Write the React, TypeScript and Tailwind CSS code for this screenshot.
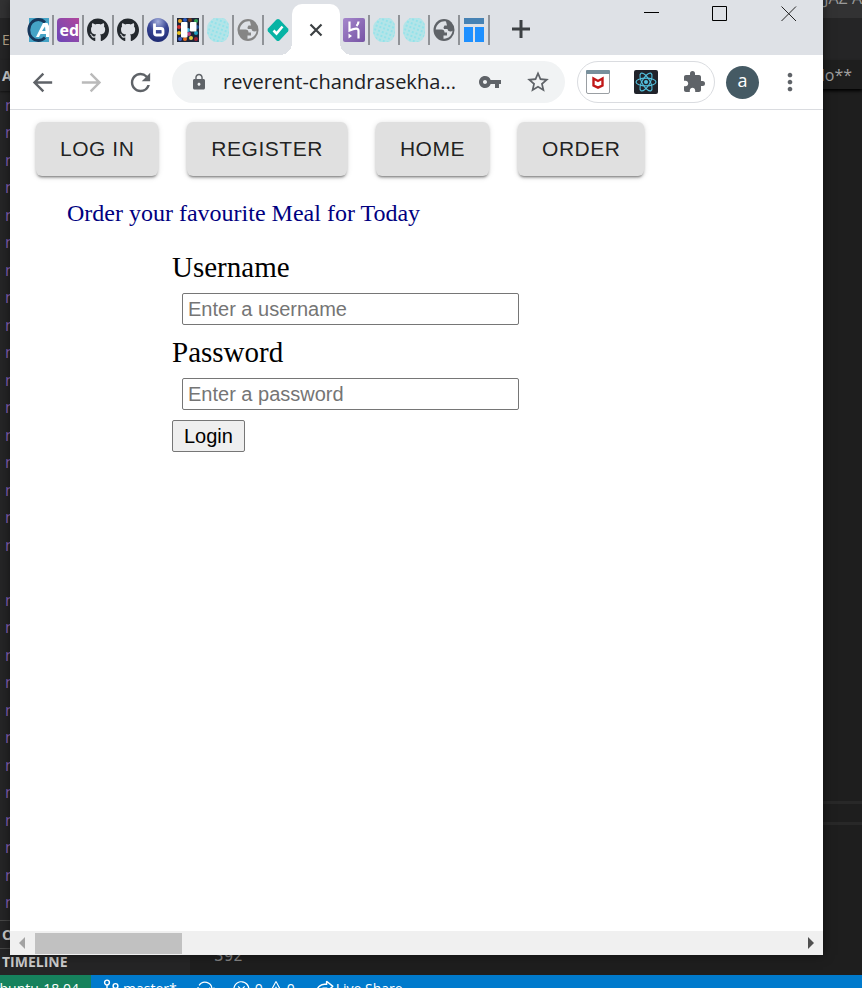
import type { ReactNode } from "react";
import { FaGithub } from "react-icons/fa";
import {
  MdArrowBack,
  MdArrowForward,
  MdExtension,
  MdLock,
  MdMoreVert,
  MdRefresh,
  MdStarBorder,
  MdVpnKey,
} from "react-icons/md";
import { VscError, VscLiveShare, VscSync, VscWarning } from "react-icons/vsc";

const UI = "font-['Open_Sans','Noto_Sans',sans-serif]";

/* ---------- favicons ---------- */

function CodeAcademyIcon() {
  return (
    <svg viewBox="0 0 22 24" className="h-6 w-[22px]">
      <rect x="2" width="20" height="24" fill="#45a3c6" />
      <path d="M18 4.500A9.500 10.500 0 1 0 18 19.500" fill="none" stroke="#17375b" strokeWidth="2.800" />
      <path d="M9 19L16 5H20.500L22 8V19H19V16H13.500L12 19Z" fill="#fff" />
      <path d="M15 13H18.500L18 8.500Z" fill="#45a3c6" />
    </svg>
  );
}

function EdIcon() {
  return (
    <span className="flex h-6 w-[22px] items-center justify-end overflow-hidden rounded-l bg-linear-to-tr from-[#6a45b8] to-[#b0459c] font-['Open_Sans',sans-serif] text-base leading-none font-bold text-white">
      ed
    </span>
  );
}

function GithubIcon() {
  return <FaGithub className="h-6 w-[22px] text-[#24292e]" preserveAspectRatio="none" />;
}

function BlueBIcon() {
  return (
    <svg viewBox="0 0 22 24" className="h-6 w-[22px]">
      <defs>
        <radialGradient id="blueBall" cx="0.5" cy="0.15" r="0.85">
          <stop offset="0" stopColor="#a5b0dd" />
          <stop offset="0.5" stopColor="#3a4795" />
          <stop offset="1" stopColor="#1e2a72" />
        </radialGradient>
      </defs>
      <ellipse cx="11" cy="12" rx="11" ry="12" fill="url(#blueBall)" />
      <path d="M7.500 5.500V15a2 2 0 0 0 2 2H14a2 2 0 0 0 2-2V12.500a2 2 0 0 0-2-2H8" fill="none" stroke="#fff" strokeWidth="2.800" />
    </svg>
  );
}

function TrelloIcon() {
  const dots = [
    ["#e8a020", 3, 3], ["#2a5cc0", 8, 2], ["#7a3a1a", 13, 2], ["#30a050", 19, 3],
    ["#d03030", 2, 9], ["#205090", 20, 9], ["#e8c020", 2, 15], ["#c04080", 12, 16],
    ["#20a0c0", 19, 15], ["#3a60d0", 3, 21], ["#e87020", 8, 21], ["#e0d040", 14, 20],
    ["#a02030", 19, 21], ["#40b0e0", 11, 12],
  ] as const;
  return (
    <svg viewBox="0 0 22 24" className="h-6 w-[22px]">
      <rect width="22" height="24" fill="#1c2438" />
      {dots.map(([fill, x, y]) => (
        <circle key={`${x}-${y}`} cx={x} cy={y} r="2" fill={fill} />
      ))}
      <rect x="4" y="4" width="6.500" height="15.500" rx="1" fill="#fff" />
      <rect x="13" y="4" width="6.500" height="9.500" rx="1" fill="#fff" />
    </svg>
  );
}

function DottedBallIcon() {
  return (
    <svg viewBox="0 0 22 24" className="h-6 w-[22px]">
      <defs>
        <pattern id="tealDots" width="4" height="4" patternUnits="userSpaceOnUse" patternTransform="rotate(20)">
          <rect width="4" height="4" fill="#b3e4e8" />
          <circle cx="2" cy="2" r="0.900" fill="#84e2ec" />
        </pattern>
      </defs>
      <path d="M7 0H17Q22 4 22 8V16Q21 21 16 24H7Q0 20 0 13V11Q0 4 7 0Z" fill="url(#tealDots)" />
    </svg>
  );
}

function GlobeIcon({ color }: { color: string }) {
  return (
    <svg viewBox="0 0 22 24" className="h-6 w-[22px]">
      <ellipse cx="11" cy="12" rx="10.500" ry="11" fill={color} />
      <path
        d="M13 3.500C8.500 2.500 3.500 6 2.700 11.500H8.500Q11.500 11.500 11.500 14.500H14V17.500H10.500V20.700C15 21 19.300 17.500 19.500 12.500C18.500 14 15 14 14.500 11H11Q9.800 9.500 11.500 7.500H14Z"
        fill="#dee1e6"
      />
    </svg>
  );
}

function DiamondCheckIcon() {
  return (
    <svg viewBox="0 0 22 24" className="h-6 w-[22px]">
      <path d="M9.500 1.500Q11 .3 12.500 1.500L21 10.500Q22 12 21 13.500L12.500 22.500Q11 23.700 9.500 22.500L1 13.500Q0 12 1 10.500Z" fill="#06b3a4" />
      <path d="M6.500 12.500L9.500 15.500L15.500 8.500" fill="none" stroke="#fff" strokeWidth="2.600" />
    </svg>
  );
}

function HerokuIcon() {
  return (
    <svg viewBox="0 0 22 24" className="h-6 w-[22px]">
      <defs>
        <linearGradient id="heroku" x1="0" y1="0" x2="1" y2="1">
          <stop offset="0" stopColor="#a587cc" />
          <stop offset="1" stopColor="#7653a4" />
        </linearGradient>
      </defs>
      <rect width="22" height="24" rx="2" fill="url(#heroku)" />
      <path d="M6.500 3.500V12.500Q15.500 8.500 15.500 13V20.500M15.500 3.500Q15.500 6 13.500 8" fill="none" stroke="#fff" strokeWidth="2.200" />
      <path d="M5.500 15.500L9 18L5.500 20.500Z" fill="#fff" />
    </svg>
  );
}

function LayoutIcon() {
  return (
    <svg viewBox="0 0 22 24" className="h-6 w-[22px]">
      <rect width="20" height="6" x="1" fill="#4682b4" />
      <rect x="1" y="9" width="9" height="15" fill="#1e90ff" />
      <rect x="12" y="9" width="9" height="15" fill="#1e90ff" />
    </svg>
  );
}

/* ---------- browser chrome ---------- */

function Tab({ label, children, last = false }: { label: string; children: ReactNode; last?: boolean }) {
  return (
    <button
      aria-label={label}
      className={`flex h-[30px] shrink-0 items-center px-[3px] ${last ? "" : "border-r-2 border-[#909398]"}`}
    >
      {children}
    </button>
  );
}

function TabStrip() {
  return (
    <header className="flex h-[55px] shrink-0 bg-[#dee1e6]">
      <div className="flex pt-[15px] pl-3.5">
        <Tab label="Academy"><CodeAcademyIcon /></Tab>
        <Tab label="ed"><EdIcon /></Tab>
        <Tab label="GitHub"><GithubIcon /></Tab>
        <Tab label="GitHub"><GithubIcon /></Tab>
        <Tab label="b"><BlueBIcon /></Tab>
        <Tab label="Board"><TrelloIcon /></Tab>
        <Tab label="Site"><DottedBallIcon /></Tab>
        <Tab label="Page"><GlobeIcon color="#858585" /></Tab>
        <Tab label="Check" last><DiamondCheckIcon /></Tab>
      </div>
      <div className="relative mt-1 flex w-12 shrink-0 items-center justify-center rounded-t-[10px] bg-white">
        <span className="absolute bottom-0 -left-3 size-3 bg-[radial-gradient(circle_at_0_0,#dee1e6_12px,#fff_12px)]" />
        <span className="absolute -right-3 bottom-0 size-3 bg-[radial-gradient(circle_at_100%_0,#dee1e6_12px,#fff_12px)]" />
        <button aria-label="Close tab">
          <svg viewBox="0 0 14 14" className="size-3.5" stroke="#3c4043" strokeWidth="2.200">
            <path d="M1.500 1.500L12.500 12.500M12.500 1.500L1.500 12.500" />
          </svg>
        </button>
      </div>
      <div className="flex pt-[15px]">
        <Tab label="Heroku"><HerokuIcon /></Tab>
        <Tab label="Site"><DottedBallIcon /></Tab>
        <Tab label="Site"><DottedBallIcon /></Tab>
        <Tab label="Page"><GlobeIcon color="#5f6368" /></Tab>
        <Tab label="Layout"><LayoutIcon /></Tab>
      </div>
      <button aria-label="New tab" className="ml-4 flex h-[58px] w-[30px] items-center justify-center">
        <svg viewBox="0 0 18 18" className="size-[18px]" stroke="#3c4043" strokeWidth="3">
          <path d="M9 0V18M0 9H18" />
        </svg>
      </button>
      <div className="ml-auto flex items-start gap-[53px] pt-[6px] pr-[26px]">
        <button aria-label="Minimize">
          <svg viewBox="0 0 16 16" className="size-4" stroke="#000"><path d="M1 6.500H16" /></svg>
        </button>
        <button aria-label="Maximize">
          <svg viewBox="0 0 16 16" className="size-4" stroke="#000" fill="none"><path d="M.5 .5H14.500V14.500H.5Z" /></svg>
        </button>
        <button aria-label="Close">
          <svg viewBox="0 0 16 16" className="size-4" stroke="#222"><path d="M.5 .5L15 15M15 .5L.5 15" /></svg>
        </button>
      </div>
    </header>
  );
}

function McAfeeIcon() {
  return (
    <svg viewBox="0 0 24 24" className="size-6">
      <rect x=".5" y=".5" width="23" height="23" rx="1.500" fill="#fff" stroke="#9a9fa3" />
      <rect width="24" height="4" rx="1" fill="#78909c" />
      <path d="M7.500 8.500L12 11L16.500 8.500V15.500L12 17.700L7.500 15.500Z" fill="none" stroke="#c01818" strokeWidth="2.400" />
    </svg>
  );
}

function ReactIcon() {
  return (
    <svg viewBox="0 0 24 24" className="size-6" fill="none" stroke="#53c1de" strokeWidth="1.100">
      <rect width="24" height="24" rx="2" fill="#20232a" stroke="none" />
      <ellipse cx="12" cy="12" rx="10" ry="3.900" />
      <ellipse cx="12" cy="12" rx="10" ry="3.900" transform="rotate(60 12 12)" />
      <ellipse cx="12" cy="12" rx="10" ry="3.900" transform="rotate(120 12 12)" />
      <circle cx="12" cy="12" r="2" fill="#53c1de" stroke="none" />
    </svg>
  );
}

function Toolbar() {
  return (
    <nav className="flex h-[55px] shrink-0 items-center border-b border-[#dadce0] bg-white pr-[19px] pl-[18px] text-[#5f6368]">
      <div className="flex gap-5">
        <button aria-label="Back"><MdArrowBack size={29} /></button>
        <button aria-label="Forward" className="text-[#bababa]"><MdArrowForward size={29} /></button>
        <button aria-label="Reload"><MdRefresh size={29} /></button>
      </div>
      <div className="ml-[17px] flex h-[42px] min-w-0 flex-1 items-center rounded-full bg-[#f1f3f4] pr-3.5 pl-[18px]">
        <MdLock size={18} className="shrink-0" />
        <input
          aria-label="Address"
          readOnly
          value="reverent-chandrasekha..."
          className={`ml-[15px] min-w-0 flex-1 bg-transparent text-xl text-[#202124] outline-none ${UI}`}
        />
        <button aria-label="Passwords" className="mr-[23px]"><MdVpnKey size={24} /></button>
        <button aria-label="Bookmark"><MdStarBorder size={26} /></button>
      </div>
      <div className="ml-3 flex h-[42px] shrink-0 items-center gap-6 rounded-full border border-[#dadce0] px-2">
        <button aria-label="McAfee"><McAfeeIcon /></button>
        <button aria-label="React Developer Tools"><ReactIcon /></button>
        <button aria-label="Extensions"><MdExtension size={24} /></button>
      </div>
      <button className={`ml-[11px] flex size-[33px] shrink-0 items-center justify-center rounded-full bg-[#455a64] pb-1 text-lg leading-none text-white ${UI}`}>
        a
      </button>
      <button aria-label="Menu" className="ml-[17px]"><MdMoreVert size={28} /></button>
    </nav>
  );
}

/* ---------- page ---------- */

function NavButton({ children }: { children: ReactNode }) {
  return (
    <button className="h-[54px] rounded-md bg-[#e0e0e0] px-6 font-['Liberation_Sans',Arial,sans-serif] text-[21px] tracking-wide text-black/87 shadow-[0_3px_2px_-2px_rgba(0,0,0,0.3),0_2px_3px_rgba(0,0,0,0.2),0_1px_6px_rgba(0,0,0,0.12)]">
      {children}
    </button>
  );
}

function Field({ id, label, type, placeholder }: { id: string; label: string; type: string; placeholder: string }) {
  return (
    <div className="flex h-[85px] flex-col">
      <label htmlFor={id} className="h-[43px] text-[29px] leading-[34px]">{label}</label>
      <input
        id={id}
        type={type}
        placeholder={placeholder}
        className="ml-2.5 h-8 w-[337px] rounded-xs border border-[#767676] px-[5px] font-['Liberation_Sans',Arial,sans-serif] text-xl placeholder:text-[#757575]"
      />
    </div>
  );
}

function Page() {
  return (
    <main className="flex-1 overflow-hidden bg-white font-['Liberation_Serif','Times_New_Roman',serif] text-black">
      <div className="flex gap-[29px] pt-3 pl-[26px]">
        <NavButton>LOG IN</NavButton>
        <NavButton>REGISTER</NavButton>
        <NavButton>HOME</NavButton>
        <NavButton>ORDER</NavButton>
      </div>
      <h1 className="mt-[21px] ml-[57px] text-2xl leading-8 text-[#000080]">Order your favourite Meal for Today</h1>
      <form className="mt-[21px] ml-[162px]" onSubmit={(e) => e.preventDefault()}>
        <Field id="username" label="Username" type="text" placeholder="Enter a username" />
        <Field id="password" label="Password" type="password" placeholder="Enter a password" />
        <button className="h-8 rounded-xs border border-[#767676] bg-[#efefef] px-[11px] font-['Liberation_Sans',Arial,sans-serif] text-xl leading-none">
          Login
        </button>
      </form>
    </main>
  );
}

function ScrollBar() {
  return (
    <div className="flex h-6 shrink-0 items-center bg-[#f0f0f0]">
      <svg viewBox="0 0 25 24" className="h-6 w-[25px]"><path d="M15 6V18L9 12Z" fill="#a3a3a3" /></svg>
      <div className="h-[21px] w-[147px] bg-[#c1c1c1]" />
      <svg viewBox="0 0 25 24" className="ml-auto h-6 w-[25px]"><path d="M10 6V18L16 12Z" fill="#505050" /></svg>
    </div>
  );
}

/* ---------- editor behind the browser ---------- */

function BranchIcon() {
  return (
    <svg viewBox="0 0 16 20" className="ml-3 h-5 w-4" fill="none" stroke="#fff" strokeWidth="1.400">
      <circle cx="4" cy="3.500" r="2.400" />
      <circle cx="12.500" cy="7" r="2.400" />
      <circle cx="4" cy="16.500" r="2.400" />
      <path d="M4 6V14M12.500 9.500Q12 12.500 8 12.500Q4.500 12.500 4 14" />
    </svg>
  );
}

function Editor() {
  const rows = Array.from({ length: 30 }, (_, i) => (i === 17 ? "" : "n"));
  return (
    <div className={`flex h-[calc(100%+15px)] flex-col bg-[#1e1e1e] ${UI}`}>
      <div className="flex h-[18px] shrink-0 justify-end overflow-hidden bg-[#323233]">
        <span className="-mt-3 text-base leading-5 text-[#9a9a9a]">JAZ A</span>
      </div>
      <div className="flex min-h-0 flex-1">
        <aside className="flex w-[190px] shrink-0 flex-col bg-[#252526] text-[#cccccc]">
          <div className="h-[42px] pl-0.5 text-sm leading-[44px] text-[#bba88c]">E</div>
          <div className="h-[31px] pl-0.5 text-sm leading-[32px] font-bold shadow-[0_1px_2px_rgba(0,0,0,0.5)]">A</div>
          <div className="flex flex-1 flex-col pb-1 pl-[5px] text-base text-[#8a62b8]">
            {rows.map((name, i) => (
              <div key={i} className="flex flex-1 items-center leading-none">{name}</div>
            ))}
          </div>
          <div className="h-7 border-t border-[#474747] pl-0.5 text-sm leading-7 font-bold">O</div>
          <div className="h-[27px] border-t border-[#474747] pl-0.5 text-sm leading-[26px] font-bold">TIMELINE</div>
        </aside>
        <section className="flex min-w-0 flex-1 flex-col">
          <div className="h-[42px] bg-[#252526]" />
          <div className="h-[29px] pr-2.5 text-right text-base leading-[31px] text-[#a0a0a0] shadow-[0_2px_3px_#000]">llo**</div>
          <div className="-mb-[21px] flex flex-1 flex-col justify-end overflow-hidden font-['DejaVu_Sans_Mono',monospace] text-base text-[#858585]">
            <div className="mb-[117px] h-6 border-y-3 border-[#282828]" />
            <div className="h-[27px] pl-6 leading-[27px]">392</div>
            <div className="h-[27px] pl-6 leading-[27px]">393</div>
          </div>
        </section>
      </div>
      <footer className="relative flex h-7 shrink-0 items-center bg-[#007acc] text-sm leading-none text-white">
        <span className="flex h-full w-[91px] items-center justify-end bg-[#16825d] pr-3 whitespace-nowrap">buntu-18.04</span>
        <BranchIcon />
        <span className="ml-1">master*</span>
        <VscSync size={20} className="ml-[18px]" />
        <VscError size={19} className="ml-[17px]" />
        <span className="ml-1">0</span>
        <VscWarning size={18} className="ml-1" />
        <span className="ml-0.5">0</span>
        <VscLiveShare size={19} className="ml-5" />
        <span className="ml-0.5">Live Share</span>
      </footer>
    </div>
  );
}

export default function App() {
  return (
    <div className="relative h-screen overflow-hidden">
      <Editor />
      <div className="absolute top-0 right-[39px] bottom-[33px] left-2.5 flex flex-col shadow-[0_0_10px_rgba(0,0,0,0.5)]">
        <TabStrip />
        <Toolbar />
        <Page />
        <ScrollBar />
      </div>
    </div>
  );
}
